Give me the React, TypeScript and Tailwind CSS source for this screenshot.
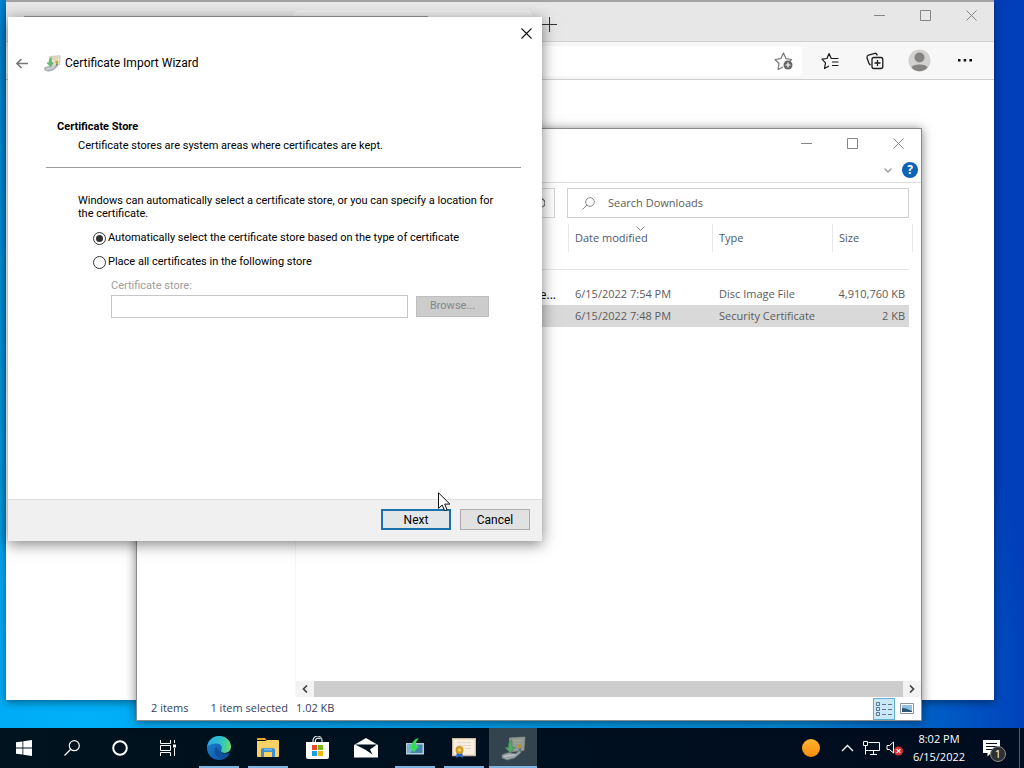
import type { ReactNode } from "react";

const files = [
  { name: "e...", modified: "6/15/2022 7:54 PM", type: "Disc Image File", size: "4,910,760 KB", selected: false },
  { name: "", modified: "6/15/2022 7:48 PM", type: "Security Certificate", size: "2 KB", selected: true },
];

function WindowControls() {
  return (
    <div className="flex text-[#858585]">
      <button aria-label="Minimize" className="flex h-[30px] w-[46px] items-center justify-center">
        <svg width="11" height="11" viewBox="0 0 11 11" stroke="currentColor"><path d="M0 5.5h11" /></svg>
      </button>
      <button aria-label="Maximize" className="flex h-[30px] w-[46px] items-center justify-center">
        <svg width="11" height="11" viewBox="0 0 11 11" fill="none" stroke="currentColor"><path d="M.5.5h10v10H.5z" /></svg>
      </button>
      <button aria-label="Close" className="flex h-[30px] w-[46px] items-center justify-center">
        <svg width="11" height="11" viewBox="0 0 11 11" stroke="currentColor"><path d="M.5.5l10 10M10.5.5l-10 10" /></svg>
      </button>
    </div>
  );
}

function WizardIcon({ size, dim }: { size: number; dim?: boolean }) {
  return (
    <svg width={size} height={size} viewBox="0 0 24 24" className={dim ? "opacity-80" : ""}>
      <path d="M8 2l15-1-1 13-13 1z" fill={dim ? "#a9b0ab" : "#ece4c8"} stroke="#a9a48c" strokeWidth=".7" />
      <path d="M11 4.500l9-.5M13 7l5-.3" stroke="#c4bc98" />
      <circle cx="18" cy="10" r="2.300" fill="#cfa83c" />
      <path d="M17 12v3.500l1.100-1 1.200 1V12z" fill="#5d7c94" />
      <path d="M10.500 3.500c-3 1.500-3.500 4-3.500 7.500H4l5 5.500 4.500-5.500H11c-.5-3-.5-5-.5-7.500z" fill="#5fbf72" stroke="#3b8f4f" strokeWidth=".5" />
      <path d="M1 18l6-2 7 1 4-3 1 2-6 5-7 2-5-2z" fill="#b5bcc0" stroke="#7d868b" strokeWidth=".7" />
      <path d="M3 20l6-1.500 5-.5" stroke="#e6eaec" fill="none" />
    </svg>
  );
}

function Browser() {
  return (
    <section className="absolute top-0 right-[30px] bottom-[28px] left-1.5 flex flex-col bg-white shadow-[0_2px_8px_rgba(0,0,0,0.45)]">
      <header className="flex h-[41px] shrink-0 items-start border-t-2 border-[#a3a3a3] bg-[#e7e7e7]">
        <div className="mt-2 ml-[287px] h-[31px] w-[240px] rounded-t-lg bg-[#f0f0f0]" />
        <button aria-label="New tab" className="mt-3.5 ml-2 flex size-4 items-center justify-center">
          <svg width="15" height="15" viewBox="0 0 15 15" stroke="#333"><path d="M0 7.500h15M7.500 0v15" /></svg>
        </button>
        <div className="-mt-0.5 ml-auto">
          <WindowControls />
        </div>
      </header>
      <div className="flex h-[39px] shrink-0 items-center border-y border-t-[#d2d2d2] border-b-[#cfcfcf] bg-[#f7f7f7] pr-[7px]">
        <div className="flex h-[30px] flex-1 items-center justify-end rounded bg-white pr-2">
          <button aria-label="Add to favorites">
            <svg width="20" height="20" viewBox="0 0 20 20" fill="none" stroke="#777" strokeWidth="1.200">
              <path d="M9 16l-5 2.500 1-6L1 8.500l5.700-.8L9.500 2l2.500 5.700 5.500.8-1.500 1.500" strokeLinejoin="round" />
              <circle cx="14" cy="14" r="4.500" fill="#666" stroke="none" />
              <path d="M14 11.500v5M11.500 14h5" stroke="#fff" />
            </svg>
          </button>
        </div>
        <div className="ml-[5px] flex items-center">
          <button aria-label="Favorites" className="flex w-[45px] justify-center">
            <svg width="18" height="18" viewBox="0 0 18 18" fill="none" stroke="#1b1b1b" strokeWidth="1.200">
              <path d="M8 14L3.500 16.500l1-5.700L1 7.200l5-.7L8 1.500l2.300 5h7.200M11 10h6.500M11 13.500h6.500" strokeLinejoin="round" />
            </svg>
          </button>
          <button aria-label="Collections" className="flex w-[45px] justify-center">
            <svg width="18" height="18" viewBox="0 0 18 18" fill="none" stroke="#1b1b1b" strokeWidth="1.300">
              <path d="M4.500 13.200L3 11.500 1 5.800Q.8 3.600 2.500 3L9 1.300Q10.800 1 11.300 3.500" />
              <rect x="6" y="5.500" width="10.800" height="11" rx="2" fill="#f7f7f7" />
              <path d="M11.500 8v6M8.500 11h6" />
            </svg>
          </button>
          <button aria-label="Profile" className="flex w-[45px] justify-center">
            <svg width="23" height="23" viewBox="0 0 23 23">
              <circle cx="11.500" cy="11.500" r="11" fill="#d3d1cf" />
              <circle cx="11.500" cy="8.500" r="5" fill="#858381" />
              <path d="M3.500 18.500c1-4 15-4 16 0-4 5-12 5-16 0z" fill="#858381" />
            </svg>
          </button>
          <button aria-label="Settings and more" className="flex w-[45px] justify-center">
            <svg width="14" height="4" viewBox="0 0 14 4" fill="#111"><path d="M0 0h2.500v2.500H0zM5.700 0h2.500v2.500H5.700zM11.400 0H14v2.500h-2.600z" /></svg>
          </button>
        </div>
      </div>
    </section>
  );
}

function Explorer() {
  return (
    <section className="absolute top-[128px] right-[102px] bottom-[7px] left-[136px] flex flex-col border border-[#8b8b8b] bg-white text-[11px] text-[#5c5c5c] shadow-[0_1px_10px_rgba(0,0,0,0.5)]">
      <header className="-mt-px flex shrink-0 justify-end">
        <WindowControls />
      </header>
      <div className="flex h-[25px] shrink-0 items-center justify-end gap-2.5 border-b border-[#dcdcdc] pr-[3px]">
        <button aria-label="Expand ribbon">
          <svg width="8" height="5" viewBox="0 0 8 5" fill="none" stroke="#999" strokeWidth="1.300"><path d="M.5.5L4 4 7.500.5" /></svg>
        </button>
        <button aria-label="Help" className="flex size-4 items-center justify-center rounded-full bg-[#0c62b4] text-xs font-bold text-white">?</button>
      </div>
      <div className="mt-[5px] flex h-[30px] shrink-0 gap-3 pr-3">
        <div className="flex flex-1 items-center justify-end border border-[#d5d5d5] pr-[9px]">
          <svg width="10" height="12" viewBox="0 0 10 12" fill="none" stroke="#666" strokeWidth="1.300"><path d="M3 2h3a3.800 3.800 0 0 1 0 8H3" /></svg>
        </div>
        <label className="flex w-[342px] items-center gap-[13px] border border-[#d0d0d0] px-3.5">
          <svg width="13" height="13" viewBox="0 0 13 13" fill="none" stroke="#888"><circle cx="8" cy="5" r="4.300" /><path d="M5 8L.5 12.500" /></svg>
          <input aria-label="Search Downloads" placeholder="Search Downloads" className="min-w-0 flex-1 outline-none placeholder:text-[#5c5c5c]" />
        </label>
      </div>
      <div className="flex min-h-0 flex-1">
        <nav className="w-[159px] shrink-0 border-r border-[#f5f5f5]" />
        <div className="flex min-w-0 flex-1 flex-col">
          <div className="flex-1 pt-1.5 pr-3">
            <table className="w-full table-fixed border-separate border-spacing-0 text-left">
              <thead>
                <tr className="h-[46px] align-top text-[#4d5a70]">
                  <th className="border-b border-[#e5e5e5]" aria-label="Name" />
                  <th className="w-[144px] border-b border-[#e5e5e5] font-normal">
                    <span className="relative flex h-7 items-center border-l border-[#e8e8e8] pl-1.5">
                      Date modified
                      <svg className="absolute top-0.5 left-[67px]" width="9" height="5" viewBox="0 0 9 5" fill="none" stroke="#888"><path d="M.5.500L4.500 4.500l4-4" /></svg>
                    </span>
                  </th>
                  <th className="w-[120px] border-b border-[#e5e5e5] font-normal">
                    <span className="flex h-7 items-center border-l border-[#e8e8e8] pl-1.5">Type</span>
                  </th>
                  <th className="w-[77px] border-b border-[#e5e5e5] font-normal">
                    <span className="-mr-1 flex h-7 items-center border-x border-[#e8e8e8] pl-1.5">Size</span>
                  </th>
                </tr>
              </thead>
              <tbody>
                <tr className="h-3.5" aria-hidden="true" />
                {files.map((file) => (
                  <tr key={file.type} className={file.selected ? "h-[22px] bg-[#d9d9d9]" : "h-[21px]"}>
                    <td className="p-0 pr-3 text-right text-xs text-black">{file.name}</td>
                    <td className="p-0 pl-[7px] whitespace-nowrap">{file.modified}</td>
                    <td className="p-0 pl-[7px] whitespace-nowrap">{file.type}</td>
                    <td className="p-0 pr-1 text-right whitespace-nowrap">{file.size}</td>
                  </tr>
                ))}
              </tbody>
            </table>
          </div>
          <div className="flex h-4 items-center bg-[#f3f3f3]">
            <button aria-label="Scroll left" className="flex w-[18px] justify-center">
              <svg width="6" height="8" viewBox="0 0 6 8" fill="none" stroke="#444" strokeWidth="1.700"><path d="M5 .5L1.500 4 5 7.500" /></svg>
            </button>
            <div className="h-full flex-1 bg-[#cdcdcd]" />
            <button aria-label="Scroll right" className="flex w-[18px] justify-center">
              <svg width="6" height="8" viewBox="0 0 6 8" fill="none" stroke="#444" strokeWidth="1.700"><path d="M1 .5L4.500 4 1 7.500" /></svg>
            </button>
          </div>
        </div>
      </div>
      <footer className="flex h-[23px] shrink-0 items-center pr-0.5 pl-3.5 text-[#33405c]">
        <span>2 items</span>
        <span className="ml-[22px]">1 item selected</span>
        <span className="ml-2">1.02 KB</span>
        <button aria-label="Details view" className="ml-auto flex h-[22px] w-[22px] items-center justify-center border border-[#5eb0d8] bg-[#cbe8f6]">
          <svg width="16" height="14" viewBox="0 0 16 14" fill="none" stroke="#5d7690">
            <path d="M.5.5h3v3h-3zM.5 5.500h3v3h-3zM.5 10.500h3v3h-3zM6 2.500h4M12 2.500h4M6 7.500h4M12 7.500h4M6 12.500h4M12 12.500h4" />
          </svg>
        </button>
        <button aria-label="Large icons view" className="flex w-6 justify-center">
          <svg width="14" height="11" viewBox="0 0 14 11">
            <path d="M.5.500h13v10H.5z" fill="#fff" stroke="#8a929a" />
            <path d="M2 2h10v7H2z" fill="#8fbfe2" />
            <path d="M2 5l4 .5 6 2.500v1H2z" fill="#2c5678" />
          </svg>
        </button>
      </footer>
    </section>
  );
}

function Wizard() {
  return (
    <section role="dialog" aria-label="Certificate Import Wizard" className="absolute top-[17px] left-2 flex w-[534px] flex-col bg-white font-[Roboto,sans-serif] text-[11px] text-black shadow-[0_3px_14px_rgba(0,0,0,0.5)]">
      <div className="absolute -top-px left-4 h-px w-[404px] bg-[#808080]" />
      <button aria-label="Close" className="flex h-8 w-8 items-center justify-center self-end">
        <svg width="11" height="11" viewBox="0 0 11 11" stroke="#111" strokeWidth="1.100"><path d="M.5.500l10 10M10.500.500l-10 10" /></svg>
      </button>
      <header className="flex h-7 items-center pl-2">
        <button aria-label="Back">
          <svg width="12" height="11" viewBox="0 0 12 11" fill="none" stroke="#777" strokeWidth="1.600"><path d="M12 5.500H1M5.500 1L1 5.500 5.500 10" /></svg>
        </button>
        <span className="ml-4 flex"><WizardIcon size={17} /></span>
        <h1 className="ml-1 text-xs">Certificate Import Wizard</h1>
      </header>
      <div className="pt-[42px] pr-[21px] pb-[181px] pl-[38px]">
        <h2 className="pl-[11px] leading-4 font-bold">Certificate Store</h2>
        <p className="mt-[3px] border-b border-[#9a9a9a] pb-[13px] pl-8 leading-4">
          Certificate stores are system areas where certificates are kept.
        </p>
        <p className="mt-[26px] pl-8 leading-[13px]">
          Windows can automatically select a certificate store, or you can specify a location for
          <br />
          the certificate.
        </p>
        <div className="mt-2.5 flex flex-col gap-2 pl-[47px]">
          <label className="flex h-4 items-center gap-0.5">
            <input type="radio" name="store" defaultChecked className="size-[13px] appearance-none rounded-full border border-[#333] bg-white p-0.5 before:block before:size-full before:rounded-full checked:before:bg-[#333]" />
            Automatically select the certificate store based on the type of certificate
          </label>
          <label className="flex h-4 items-center gap-0.5">
            <input type="radio" name="store" className="size-[13px] appearance-none rounded-full border border-[#333] bg-white p-0.5 before:block before:size-full before:rounded-full checked:before:bg-[#333]" />
            Place all certificates in the following store
          </label>
        </div>
        <div className="mt-2 pl-[65px]">
          <label htmlFor="store-name" className="block leading-4 text-[#9d9d9d]">Certificate store:</label>
          <div className="mt-px flex items-center gap-2">
            <input id="store-name" disabled className="h-[23px] w-[297px] border border-[#c6c6c6] bg-white px-1" />
            <button disabled className="h-[21px] w-[73px] border border-[#bfbfbf] bg-[#cccccc] text-[#868686]">Browse...</button>
          </div>
        </div>
      </div>
      <footer className="flex h-[42px] items-center justify-end gap-[9px] border-t border-[#dfdfdf] bg-[#f0f0f0] pr-3 pb-0.5">
        <button className="h-[21px] w-[70px] border-2 border-[#1a72ad] bg-[#e2e6e8] text-xs leading-4">Next</button>
        <button className="h-[21px] w-[70px] border border-[#adadad] bg-[#e1e1e1] text-xs leading-4">Cancel</button>
      </footer>
    </section>
  );
}

function TaskButton({ label, open, active, children }: { label: string; open?: boolean; active?: boolean; children: ReactNode }) {
  return (
    <button aria-label={label} className={active ? "relative flex h-10 w-12 items-center justify-center bg-[#34444e]" : "relative flex h-10 w-12 items-center justify-center"}>
      {children}
      {open && <span className={active ? "absolute inset-x-0 bottom-0 h-0.5 bg-[#7db4e0]" : "absolute inset-x-1 bottom-0 h-0.5 bg-[#7db4e0]"} />}
    </button>
  );
}

function Taskbar() {
  return (
    <footer className="flex h-10 shrink-0 items-center bg-linear-to-r from-[#00131e] to-[#000c1f] text-white">
      <TaskButton label="Start">
        <svg width="16" height="16" viewBox="0 0 16 16" fill="#fff"><path d="M0 2.300L6.500 1.400v6.200H0zM7.300 1.300L16 0v7.600H7.300zM0 8.400h6.500v6.200L0 13.700zM7.300 8.400H16V16l-8.700-1.300z" /></svg>
      </TaskButton>
      <TaskButton label="Search">
        <svg width="16" height="16" viewBox="0 0 16 16" fill="none" stroke="#fff" strokeWidth="1.200"><circle cx="10.300" cy="5.700" r="5" /><path d="M6.500 9.500L.5 15.500" /></svg>
      </TaskButton>
      <TaskButton label="Cortana">
        <svg width="16" height="16" viewBox="0 0 16 16" fill="none" stroke="#fff" strokeWidth="2"><circle cx="8" cy="8" r="6.800" /></svg>
      </TaskButton>
      <TaskButton label="Task View">
        <svg width="16" height="16" viewBox="0 0 16 16" fill="none" stroke="#fff"><path d="M.5 0v3.500h10V0M.5 16v-3.500h10V16M.5 5.500h10v5H.5zM14.500 0v3M14.500 8v8" /><path d="M13 4.500h3v3h-3z" fill="#fff" stroke="none" /></svg>
      </TaskButton>
      <div className="ml-[3px] flex gap-px">
        <TaskButton label="Microsoft Edge" open>
          <svg width="24" height="24" viewBox="0 0 24 24">
            <defs>
              <linearGradient id="edge-top" x1="0" y1=".4" x2="1" y2=".5"><stop stopColor="#2aa9e8" /><stop offset=".6" stopColor="#2fc4c4" /><stop offset="1" stopColor="#67dc68" /></linearGradient>
              <linearGradient id="edge-low" x1="0" y1="0" x2="1" y2="1"><stop stopColor="#1b86d8" /><stop offset="1" stopColor="#0f4a96" /></linearGradient>
            </defs>
            <circle cx="12" cy="12" r="12" fill="url(#edge-low)" />
            <path d="M.2 11C1 4 6 0 12 0c7 0 12 5 12 10.500 0 4-3 6.500-6.500 6.500-3 0-4-1.500-3.500-2.500 2-2.500.5-7-4.500-7C5 7.500 1.500 9 .2 11z" fill="url(#edge-top)" />
            <path d="M9 11c-4 5 0 11 7 11 3-.8 5-2.500 6.500-5-6 3-11 1-10.500-3z" fill="#124f9c" />
            <path d="M13.500 14.500c0 3 4.500 4.500 9 2.300L24 19V13c-1 2.500-3.500 4-6.500 4-2.500 0-3.800-1-3.500-2.500z" fill="#00131e" />
          </svg>
        </TaskButton>
        <TaskButton label="File Explorer" open>
          <svg width="22" height="20" viewBox="0 0 22 20"><path d="M0 1q0-1 1-1h7l1.500 2H0z" fill="#e9a526" /><path d="M0 3h8l2-1h11q1 0 1 1v15q0 1-1 1H1q-1 0-1-1z" fill="#fbd166" /><path d="M4 19v-7q0-2 2-2h10q2 0 2 2v7h-3v-5H7v5z" fill="#3e8ed0" /><path d="M7 10.500h8v2H7z" fill="#73b4e6" /></svg>
        </TaskButton>
        <TaskButton label="Microsoft Store">
          <svg width="23" height="24" viewBox="0 0 23 24"><path d="M7 7V4.500a4.500 4.500 0 0 1 9 0V7M9.500 6a3 3 0 0 1 5-3" fill="none" stroke="#e5e5e5" strokeWidth="1.200" /><path d="M0 6h23v15q0 2-2 2H2q-2 0-2-2z" fill="#fff" /><path d="M6 9h5v5H6z" fill="#e74c27" /><path d="M12 9h5v5h-5z" fill="#79b51d" /><path d="M6 15h5v5H6z" fill="#1b9de2" /><path d="M12 15h5v5h-5z" fill="#f5b511" /></svg>
        </TaskButton>
        <TaskButton label="Mail">
          <svg width="24" height="20" viewBox="0 0 24 20"><path d="M0 7L12 0l12 7v12.500H0z" fill="#fff" /><path d="M1 6.500h22l-7 5 2.500 5L11 11.500z" fill="#00131e" /></svg>
        </TaskButton>
        <TaskButton label="Installer" open>
          <svg width="20" height="20" viewBox="0 0 20 20"><path d="M1 5h18v11.500H1z" fill="#b4ccd8" /><path d="M2.500 6.500h15V15h-15z" fill="#4585ad" /><path d="M3 7h10L5 15H3z" fill="#79b1cf" /><path d="M14 0C9 1 7 4 7 8H4.500l4.500 6.500L14 8h-3c-.5-3 .5-5.500 3-8z" fill="#35dc54" /></svg>
        </TaskButton>
        <TaskButton label="Certificate" open>
          <svg width="24" height="20" viewBox="0 0 24 20"><path d="M.5.500h23v17H.5z" fill="#f8efe0" stroke="#cdbba0" strokeWidth="1.500" /><path d="M5 4.500h14M5 7.500h14M13 10.500h6" stroke="#e0d7c6" /><path d="M5 13l-1 7 3.500-2L11 20l-1-7z" fill="#2d66c9" /><circle cx="7.500" cy="12" r="4" fill="#cf9a22" /><circle cx="7.500" cy="12" r="1.800" fill="#f5cd5f" /></svg>
        </TaskButton>
        <TaskButton label="Certificate Import Wizard" open active>
          <WizardIcon size={25} dim />
        </TaskButton>
      </div>
      <div className="ml-auto flex h-full items-center">
        <button aria-label="Weather" className="mr-[21px] size-[18px] rounded-full bg-linear-to-b from-[#ffb62d] to-[#f68a0c]" />
        <button aria-label="Show hidden icons" className="flex w-[13px] justify-center">
          <svg width="13" height="8" viewBox="0 0 13 8" fill="none" stroke="#fff" strokeWidth="1.300"><path d="M1 7l5.500-5.500L12 7" /></svg>
        </button>
        <button aria-label="Network" className="ml-[9px]">
          <svg width="17" height="14" viewBox="0 0 17 14" fill="none" stroke="#fff"><path d="M5.500 1.500h11v8h-11M.5.500h4v4h-4zM2.500 5v4.500h3M10.500 10v3M7 13.500h7M2.500 9.500v4" /></svg>
        </button>
        <button aria-label="Volume muted" className="ml-1.5">
          <svg width="18" height="16" viewBox="0 0 18 16"><path d="M1 5.500h2.500l4-3.500v11l-4-3.500H1z" fill="none" stroke="#fff" /><circle cx="12.500" cy="11" r="4.500" fill="#d92f2f" /><path d="M10.700 9.200l3.600 3.600M14.300 9.200l-3.600 3.600" stroke="#fff" strokeWidth="1.200" /></svg>
        </button>
        <button className="flex w-[70px] flex-col items-center text-[11px] leading-[18px]">
          <time>8:02 PM</time>
          <time>6/15/2022</time>
        </button>
        <button aria-label="1 new notification" className="relative mr-2.5 ml-[9px] h-6 w-[26px]">
          <svg width="17" height="17" viewBox="0 0 17 17" className="absolute top-1 left-0"><path d="M0 0h17v13H8l-3.500 3.500V13H0z" fill="#fff" /><path d="M3 3.500h11M3 6.500h11M3 9.500h7" stroke="#00101f" /></svg>
          <span className="absolute top-2.5 left-[7px] flex size-4 items-center justify-center rounded-full border border-[#8b8b8b] bg-[#2d3034] text-[11px]">1</span>
        </button>
        <span className="mr-1 h-full w-px bg-[#4f5a68]" />
      </div>
    </footer>
  );
}

export default function App() {
  return (
    <div className="flex h-screen flex-col overflow-hidden font-['Open_Sans','Noto_Sans',sans-serif]">
      <main className="relative flex-1 bg-[radial-gradient(circle_at_8%_100%,#00b0f8,#0089d8_60%,#003fb9_80%)]">
        <Browser />
        <Explorer />
        <Wizard />
        <svg className="absolute top-[492px] left-[438px]" width="13" height="20" viewBox="0 0 13 20"><path d="M.5.800v15.500L4.200 13l2.400 5.700 2.500-1-2.400-5.600h5.200z" fill="#fff" stroke="#111" /></svg>
      </main>
      <Taskbar />
    </div>
  );
}
